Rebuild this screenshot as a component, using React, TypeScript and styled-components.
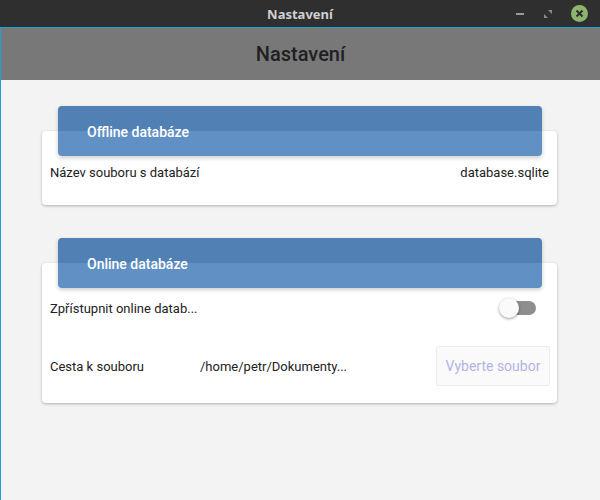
import React from 'react';
import styled, { createGlobalStyle } from 'styled-components';

const GlobalStyle = createGlobalStyle`
  html, body {
    margin: 0;
    padding: 0;
    background: #f3f3f3;
    font-family: Roboto, "Liberation Sans", sans-serif;
  }
`;

const Window = styled.div`
  width: 600px;
  height: 500px;
  display: flex;
  flex-direction: column;
  overflow: hidden;
  background: #f3f3f3;
`;

const TitleBar = styled.div`
  height: 27px;
  flex: none;
  background: #2f2f2f;
  display: flex;
  align-items: center;
  justify-content: center;
  position: relative;
  color: #d0d0d0;
  font-family: "Noto Sans", "DejaVu Sans", sans-serif;
  font-weight: 700;
  font-size: 13px;
`;

const Controls = styled.div`
  position: absolute;
  right: 12px;
  top: 0;
  bottom: 0;
  display: flex;
  align-items: center;
  gap: 18px;
`;

const Body = styled.div`
  flex: 1;
  display: flex;
  flex-direction: column;
  border-top: 1px solid #1ba1d4;
  border-left: 1px solid #1ba1d4;
`;

const AppBar = styled.div`
  height: 52px;
  flex: none;
  background: #787878;
  display: flex;
  align-items: center;
  justify-content: center;
  color: #1f1f24;
  font-size: 20px;
  font-weight: 500;
`;

const Content = styled.div`
  padding: 26px 43px 0 41px;
  display: flex;
  flex-direction: column;
  gap: 33px;
`;

const Card = styled.div`
  margin-top: 25px;
  background: #fff;
  border-radius: 4px;
  box-shadow: 0 1px 3px rgba(0, 0, 0, 0.28);
  display: flex;
  flex-direction: column;
  padding: 0 7px 17px 8px;
`;

const CardHeader = styled.div`
  margin: -25px 8px 0 8px;
  height: 50px;
  box-sizing: border-box;
  border-radius: 4px;
  background: linear-gradient(to bottom, #5180b4 25px, #6190c4 25px);
  box-shadow: 0 2px 4px rgba(0, 0, 0, 0.2);
  display: flex;
  align-items: center;
  padding: 2px 0 0 29px;
  color: #fff;
  font-size: 14px;
  font-weight: 500;
`;

const Row = styled.div<{ $height: number; $top?: number }>`
  height: ${p => p.$height}px;
  margin-top: ${p => p.$top || 0}px;
  display: flex;
  align-items: center;
  font-size: 13px;
  color: #222;
`;

const Label = styled.span<{ $width?: number }>`
  width: ${p => (p.$width ? `${p.$width}px` : 'auto')};
  flex: ${p => (p.$width ? 'none' : '1')};
`;

const Value = styled.span<{ $right?: boolean }>`
  flex: 1;
  text-align: ${p => (p.$right ? 'right' : 'left')};
  padding-right: ${p => (p.$right ? '1px' : '0')};
`;

const SwitchWrap = styled.div`
  position: relative;
  width: 36px;
  height: 20px;
  margin-right: 14px;
  display: flex;
  align-items: center;
`;

const Track = styled.div`
  width: 34px;
  height: 14px;
  margin-left: 2px;
  border-radius: 7px;
  background: #8e8e8e;
`;

const Knob = styled.div`
  position: absolute;
  left: -1px;
  top: 0;
  width: 20px;
  height: 20px;
  border-radius: 50%;
  background: #fafafa;
  box-shadow: 0 1px 3px rgba(0, 0, 0, 0.4);
`;

const FileButton = styled.button`
  width: 114px;
  height: 40px;
  border: 1px solid #ececec;
  border-radius: 2px;
  background: #fafafa;
  color: #b3b3e4;
  font-family: Roboto, "Liberation Sans", sans-serif;
  font-size: 14px;
  padding: 0;
`;

function Section({ title, children }: { title: string; children: React.ReactNode }) {
  return (
    <Card>
      <CardHeader>{title}</CardHeader>
      {children}
    </Card>
  );
}

export default function App() {
  return (
    <Window>
      <GlobalStyle />
      <TitleBar>
        Nastavení
        <Controls>
          <svg width="10" height="10" viewBox="0 0 10 10">
            <rect x="1" y="4" width="8" height="2" fill="#9a9a9a" />
          </svg>
          <svg width="10" height="10" viewBox="0 0 10 10">
            <path d="M5 1 H9 V5 Z" fill="#8a8a8a" />
            <path d="M1 5 V9 H5 Z" fill="#8a8a8a" />
          </svg>
          <svg width="17" height="17" viewBox="0 0 17 17">
            <circle cx="8.5" cy="8.5" r="8.5" fill="#8db56e" />
            <path d="M5.5 5.5 L11.5 11.5 M11.5 5.5 L5.5 11.5" stroke="#2f2f2f" strokeWidth="2" />
          </svg>
        </Controls>
      </TitleBar>
      <Body>
        <AppBar>Nastavení</AppBar>
        <Content>
          <Section title="Offline databáze">
            <Row $height={32}>
              <Label>Název souboru s databází</Label>
              <Value $right>database.sqlite</Value>
            </Row>
          </Section>
          <Section title="Online databáze">
            <Row $height={40}>
              <Label>Zpřístupnit online datab...</Label>
              <SwitchWrap>
                <Track />
                <Knob />
              </SwitchWrap>
            </Row>
            <Row $height={40} $top={18}>
              <Label $width={150}>Cesta k souboru</Label>
              <Value>/home/petr/Dokumenty...</Value>
              <FileButton>Vyberte soubor</FileButton>
            </Row>
          </Section>
        </Content>
      </Body>
    </Window>
  );
}
